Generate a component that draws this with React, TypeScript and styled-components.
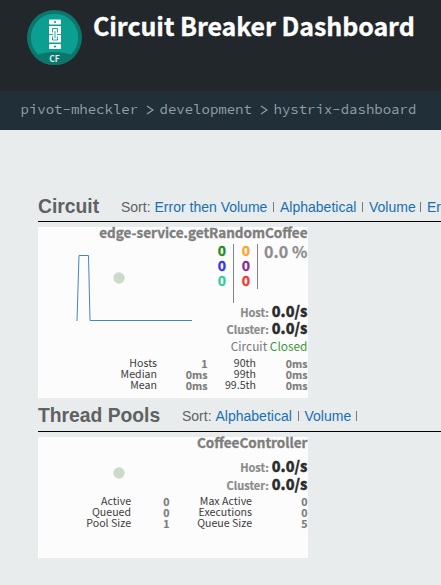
import React from 'react';
import styled, { createGlobalStyle } from 'styled-components';

const Global = createGlobalStyle`
  * { box-sizing: border-box; }
  body { margin: 0; background: #e8eced; overflow: hidden; }
`;
const sans = `"Source Sans Pro", "Noto Sans CJK SC", "Noto Sans", sans-serif`;

const Page = styled.div`
  width: 441px; height: 585px; overflow: hidden;
  background: #e8eced; font-family: ${sans}; white-space: nowrap;
`;
const Header = styled.header`
  height: 91px; background: #22272b; display: flex; align-items: flex-start;
  padding: 9px 0 0 26px; gap: 11px;
`;
const Title = styled.h1`
  margin: 0; color: #fff; font-size: 25px; font-weight: 700; line-height: 32px;
  letter-spacing: -0.07px; -webkit-text-stroke: 0.3px #fff;
`;
const Crumbs = styled.nav`
  height: 39px; background: #202f38; display: flex; align-items: center;
  padding: 0 0 3px 20.5px; color: #94a0a5; font-family: "Source Code Pro", "Noto Sans Mono CJK SC", "Liberation Mono", monospace;
  font-size: 14px; line-height: 20px;
`;
const Crumb = styled.span<{ $w: number }>`width: ${p => p.$w}px;`;
const Chevron = styled.svg`margin: 2px 6px 0 8px; display: block;`;
const Main = styled.main`padding: 64px 0 0 38px;`;
const SectionHead = styled.div<{ $h: number; $gap: number }>`
  height: ${p => p.$h}px; border-bottom: 1px solid #000; display: flex; align-items: flex-start;
  gap: ${p => p.$gap}px; font-family: "Liberation Sans", Arial, sans-serif; color: #5f6163;
  margin-bottom: 5px;
`;
const Heading = styled.h2<{ $w: number }>`
  margin: 0; width: ${p => p.$w}px; font-size: 19.3px; font-weight: 700; line-height: 25px;
`;
const Sort = styled.div`font-size: 14px; line-height: 27px; display: flex;`;
const Link = styled.a<{ $w: number }>`color: #1a6fb0; width: ${p => p.$w}px;`;
const Label = styled.span<{ $w: number }>`width: ${p => p.$w}px;`;
const Bar = styled.span`width: 1px; height: 10px; margin: 8px 6px 0 5px; background: #77797b;`;
const Card = styled.section<{ $h: number }>`
  width: 270px; height: ${p => p.$h}px; background: #fcfcfc; color: #7e7e7e; margin-bottom: 5px;
`;
const CardTitle = styled.div`
  text-align: right; font-size: 13.5px; font-weight: 700; line-height: 11px; height: 17px;
  padding-right: 0.5px; -webkit-text-stroke: 0.35px currentColor;
`;
const Body = styled.div<{ $h: number }>`display: flex; height: ${p => p.$h}px;`;
const Chart = styled.svg`display: block; width: 170px; height: 100%; flex: none;`;
const Side = styled.div`flex: 1; min-width: 0;`;
const Counters = styled.div`display: flex; height: 59px;`;
const CountCol = styled.div<{ $w: number; $h: number }>`
  width: ${p => p.$w}px; height: ${p => p.$h}px; border-right: 1px solid #858585;
  padding-right: 7px; text-align: right; font-size: 14px; font-weight: 700;
  -webkit-text-stroke: 0.35px currentColor;
`;
const Count = styled.div<{ $c: string }>`
  color: ${p => p.$c}; height: 15px; line-height: 13px;
`;
const Percent = styled.div`
  flex: 1; text-align: right; font-size: 16px; font-weight: 700; line-height: 15px; color: #8c8c8c;
  letter-spacing: 0.1px; padding-right: 0.5px; -webkit-text-stroke: 0.25px currentColor;
`;
const Rate = styled.div<{ $h: number }>`
  height: ${p => p.$h}px; line-height: ${p => p.$h}px; display: flex; justify-content: flex-end;
  align-items: baseline; gap: 3px; font-size: 11px; font-weight: 700; color: #8a8a8a;
  padding-right: 0.5px; -webkit-text-stroke: 0.2px currentColor;
`;
const RateValue = styled.span`font-size: 14.5px; font-weight: 900; color: #2c2c2c; -webkit-text-stroke: 0.35px currentColor;`;
const Status = styled.div`text-align: right; font-size: 11.9px; line-height: 18px; color: #777; padding-right: 0.5px;`;
const Closed = styled.span`color: #3b963b;`;
const Stats = styled.div<{ $cols: string }>`
  display: grid; grid-template-columns: ${p => p.$cols}; text-align: right;
  grid-auto-rows: 11px; line-height: 10px; font-size: 10.6px; color: #3b3b3b;
`;
const Stat = styled.span`
  font-weight: 700; color: #7c7c7c; padding-top: 1px; padding-right: 0.5px; -webkit-text-stroke: 0.2px currentColor;
`;
const Dot = ({ y }: { y: number }) => <circle cx="81" cy={y} r="5.7" fill="#ccdacb" />;

const Logo = () => (
  <svg width="56" height="57" viewBox="0 0 56 57">
    <circle cx="28.5" cy="28.5" r="27.5" fill="#0d766b" />
    <circle cx="28.5" cy="28.5" r="23.7" fill="#0b9f92" />
    <path d="M8 47 Q28 39 49 47 Q41 56 28.5 56 Q16 56 8 47Z" fill="#0d766b" />
    <g fill="#fff">
      <rect x="23" y="10.5" width="12" height="5" rx=".7" />
      <rect x="23" y="17" width="12" height="16.5" rx=".5" />
      <rect x="23" y="35" width="12" height="5" rx=".7" />
    </g>
    <g fill="none" stroke="#0b9f92" strokeWidth="0.9">
      <path d="M23 25.5h4M31 25.5h4M26.5 23.5v-4h5v4M26.5 27.5v3.5h5v-3.5M29 22v7" />
    </g>
    <circle cx="29" cy="13" r="1.1" fill="#0b9f92" />
    <circle cx="29" cy="37.5" r="1.1" fill="#0b9f92" />
    <text x="28.5" y="52.6" textAnchor="middle" fill="#d9efec" fontSize="8.5" fontWeight="700" fontFamily="Noto Sans CJK SC, sans-serif">CF</text>
  </svg>
);
const Arrow = () => (
  <Chevron width="8" height="10" viewBox="0 0 8 10">
    <path d="M1 1l6 4-6 4" fill="none" stroke="#94a0a5" strokeWidth="1.2" />
  </Chevron>
);
const Throughput = ({ name, h }: { name: string; h: number }) => (
  <Rate $h={h}>{name}:<RateValue>0.0/s</RateValue></Rate>
);
const Rows = ({ cols, rows }: { cols: string; rows: string[][] }) => (
  <Stats $cols={cols}>
    {rows.map(([a, b, c, d]) => (
      <React.Fragment key={a}><span>{a}</span><Stat>{b}</Stat><span>{c}</span><Stat>{d}</Stat></React.Fragment>
    ))}
  </Stats>
);

export default function App() {
  return (
    <Page>
      <Global />
      <Header><Logo /><Title>Circuit Breaker Dashboard</Title></Header>
      <Crumbs>
        <Crumb $w={117}>pivot-mheckler</Crumb><Arrow />
        <Crumb $w={92}>development</Crumb><Arrow />
        <Crumb $w={145}>hystrix-dashboard</Crumb>
      </Crumbs>
      <Main>
        <SectionHead $h={28} $gap={22}>
          <Heading $w={61}>Circuit</Heading>
          <Sort>
            <Label $w={33.5}>Sort:</Label><Link $w={113.5}>Error then Volume</Link><Bar />
            <Link $w={77}>Alphabetical</Link><Bar /><Link $w={46}>Volume</Link><Bar /><Link $w={100}>Error</Link>
          </Sort>
        </SectionHead>
        <Card $h={171}>
          <CardTitle>edge-service.getRandomCoffee</CardTitle>
          <Body $h={114}>
            <Chart viewBox="0 0 170 114">
              <path d="M39 77L41 11.5H50.5L52 76.5H154" fill="none" stroke="#4785c0" strokeWidth="1" />
              <Dot y={34} />
            </Chart>
            <Side>
              <Counters>
                <CountCol $w={26} $h={59}>
                  <Count $c="#238b23">0</Count><Count $c="#3333f2">0</Count><Count $c="#37cba2">0</Count>
                </CountCol>
                <CountCol $w={24} $h={45}>
                  <Count $c="#ffa32e">0</Count><Count $c="#882c91">0</Count><Count $c="#fb3232">0</Count>
                </CountCol>
                <Percent>0.0 %</Percent>
              </Counters>
              <Throughput name="Host" h={16} />
              <Throughput name="Cluster" h={18} />
              <Status>Circuit <Closed>Closed</Closed></Status>
            </Side>
          </Body>
          <Rows cols="119px 51px 48px 52px" rows={[
            ['Hosts', '1', '90th', '0ms'], ['Median', '0ms', '99th', '0ms'], ['Mean', '0ms', '99.5th', '0ms'],
          ]} />
        </Card>
        <SectionHead $h={29} $gap={22}>
          <Heading $w={122}>Thread Pools</Heading>
          <Sort>
            <Label $w={33.5}>Sort:</Label><Link $w={77}>Alphabetical</Link><Bar /><Link $w={46}>Volume</Link><Bar />
          </Sort>
        </SectionHead>
        <Card $h={121}>
          <CardTitle>CoffeeController</CardTitle>
          <Body $h={42}>
            <Chart viewBox="0 0 170 42"><Dot y={19} /></Chart>
            <Side><Throughput name="Host" h={24} /><Throughput name="Cluster" h={12} /></Side>
          </Body>
          <Rows cols="93px 39px 82px 56px" rows={[
            ['Active', '0', 'Max Active', '0'], ['Queued', '0', 'Executions', '0'], ['Pool Size', '1', 'Queue Size', '5'],
          ]} />
        </Card>
      </Main>
    </Page>
  );
}
